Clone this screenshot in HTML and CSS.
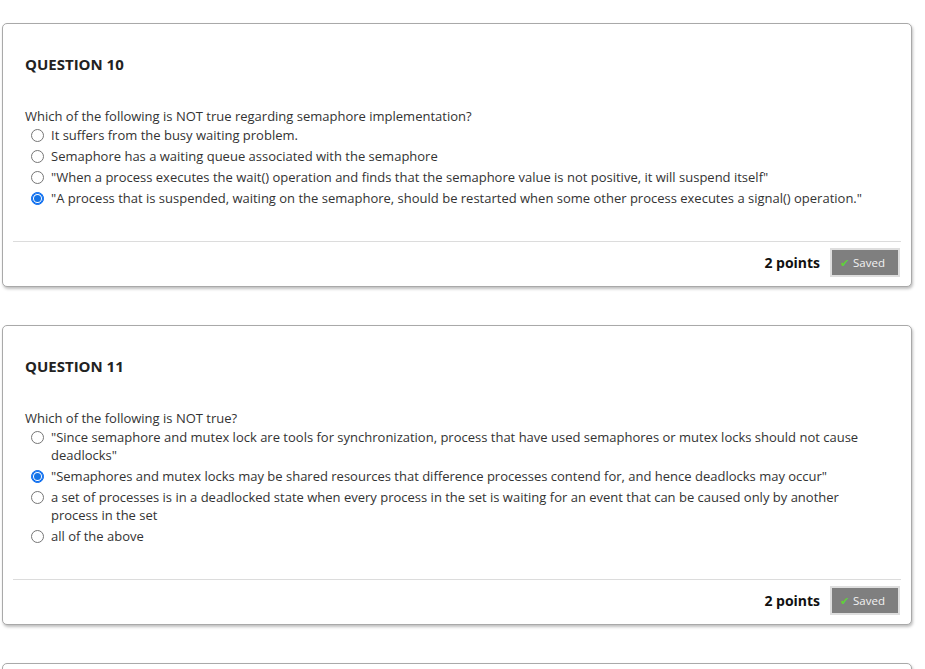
FILE: index.html
```html
<!DOCTYPE html>
<html>
<head>
<meta charset="utf-8">
<link rel="stylesheet" href="styles.css">
</head>
<body>
<div class="page">
  <div class="card">
    <div class="body">
      <h3 class="title">QUESTION 10</h3>
      <div class="question">Which of the following is NOT true regarding semaphore implementation?</div>
      <ul class="options">
        <li><span class="radio"></span><span class="label">It suffers from the busy waiting problem.</span></li>
        <li><span class="radio"></span><span class="label">Semaphore has a waiting queue associated with the semaphore</span></li>
        <li><span class="radio"></span><span class="label">"When a process executes the wait() operation and finds that the semaphore value is not positive, it will suspend itself"</span></li>
        <li><span class="radio checked"></span><span class="label">"A process that is suspended, waiting on the semaphore, should be restarted when some other process executes a signal() operation."</span></li>
      </ul>
    </div>
    <div class="footer">
      <span class="points">2 points</span>
      <span class="saved"><span class="check">&#10004;</span>Saved</span>
    </div>
  </div>

  <div class="card">
    <div class="body">
      <h3 class="title">QUESTION 11</h3>
      <div class="question">Which of the following is NOT true?</div>
      <ul class="options">
        <li><span class="radio"></span><span class="label">"Since semaphore and mutex lock are tools for synchronization, process that have used semaphores or mutex locks should not cause deadlocks"</span></li>
        <li><span class="radio checked"></span><span class="label">"Semaphores and mutex locks may be shared resources that difference processes contend for, and hence deadlocks may occur"</span></li>
        <li><span class="radio"></span><span class="label">a set of processes is in a deadlocked state when every process in the set is waiting for an event that can be caused only by another process in the set</span></li>
        <li><span class="radio"></span><span class="label">all of the above</span></li>
      </ul>
    </div>
    <div class="footer">
      <span class="points">2 points</span>
      <span class="saved"><span class="check">&#10004;</span>Saved</span>
    </div>
  </div>

  <div class="card card-next"></div>
</div>
</body>
</html>
```

FILE: styles.css
```css
html, body {
  margin: 0;
  padding: 0;
  background: #ffffff;
  font-family: "Open Sans", "Liberation Sans", sans-serif;
  color: #333333;
  overflow: hidden;
}

.page {
  padding: 23px 13px 0 2px;
  display: flex;
  flex-direction: column;
  gap: 38px;
}

.card {
  border: 1px solid #a9a9a9;
  border-radius: 5px;
  box-shadow: 1px 2px 3px rgba(0, 0, 0, 0.25);
  background: #fff;
  padding: 0 10px;
}

.card-next {
  height: 60px;
}

.body {
  padding: 30px 0 34px 12px;
  border-bottom: 1px solid #dcdcdc;
}

.title {
  margin: 0;
  font-size: 15px;
  font-weight: 700;
  line-height: 20px;
  color: #222222;
}

.question {
  margin-top: 33px;
  margin-bottom: 1px;
  font-size: 13px;
  line-height: 18px;
}

.options {
  list-style: none;
  margin: 0;
  padding: 0 0 0 6px;
  display: flex;
  flex-direction: column;
  gap: 3px;
}

.options li {
  display: flex;
  align-items: flex-start;
  font-size: 13px;
  line-height: 18px;
}

.radio {
  flex: none;
  width: 11px;
  height: 11px;
  border: 1px solid #767676;
  border-radius: 50%;
  margin: 3px 7px 0 0;
  background: #fff;
  box-sizing: content-box;
}

.radio.checked {
  border-color: #0a6cf0;
  background: #1473e6;
  box-shadow: inset 0 0 0 2px #fff;
  position: relative;
}

.radio.checked::after {
  content: "";
  position: absolute;
  inset: 0;
  border-radius: 50%;
  box-shadow: inset 0 0 0 1px #0a6cf0;
}

.label {
  padding-right: 30px;
}

.footer {
  display: flex;
  justify-content: flex-end;
  align-items: center;
  gap: 10px;
  padding: 6px 1px 9px 0;
}

.points {
  font-size: 14px;
  font-weight: 700;
  color: #111111;
}

.saved {
  display: flex;
  align-items: center;
  height: 25px;
  padding: 0 13px 0 8px;
  background: #7f7f7f;
  border: 2px solid #dedede;
  color: #f2f2f2;
  font-size: 11.5px;
}

.check {
  color: #5fd13a;
  font-size: 11px;
  margin-right: 4px;
}
```
